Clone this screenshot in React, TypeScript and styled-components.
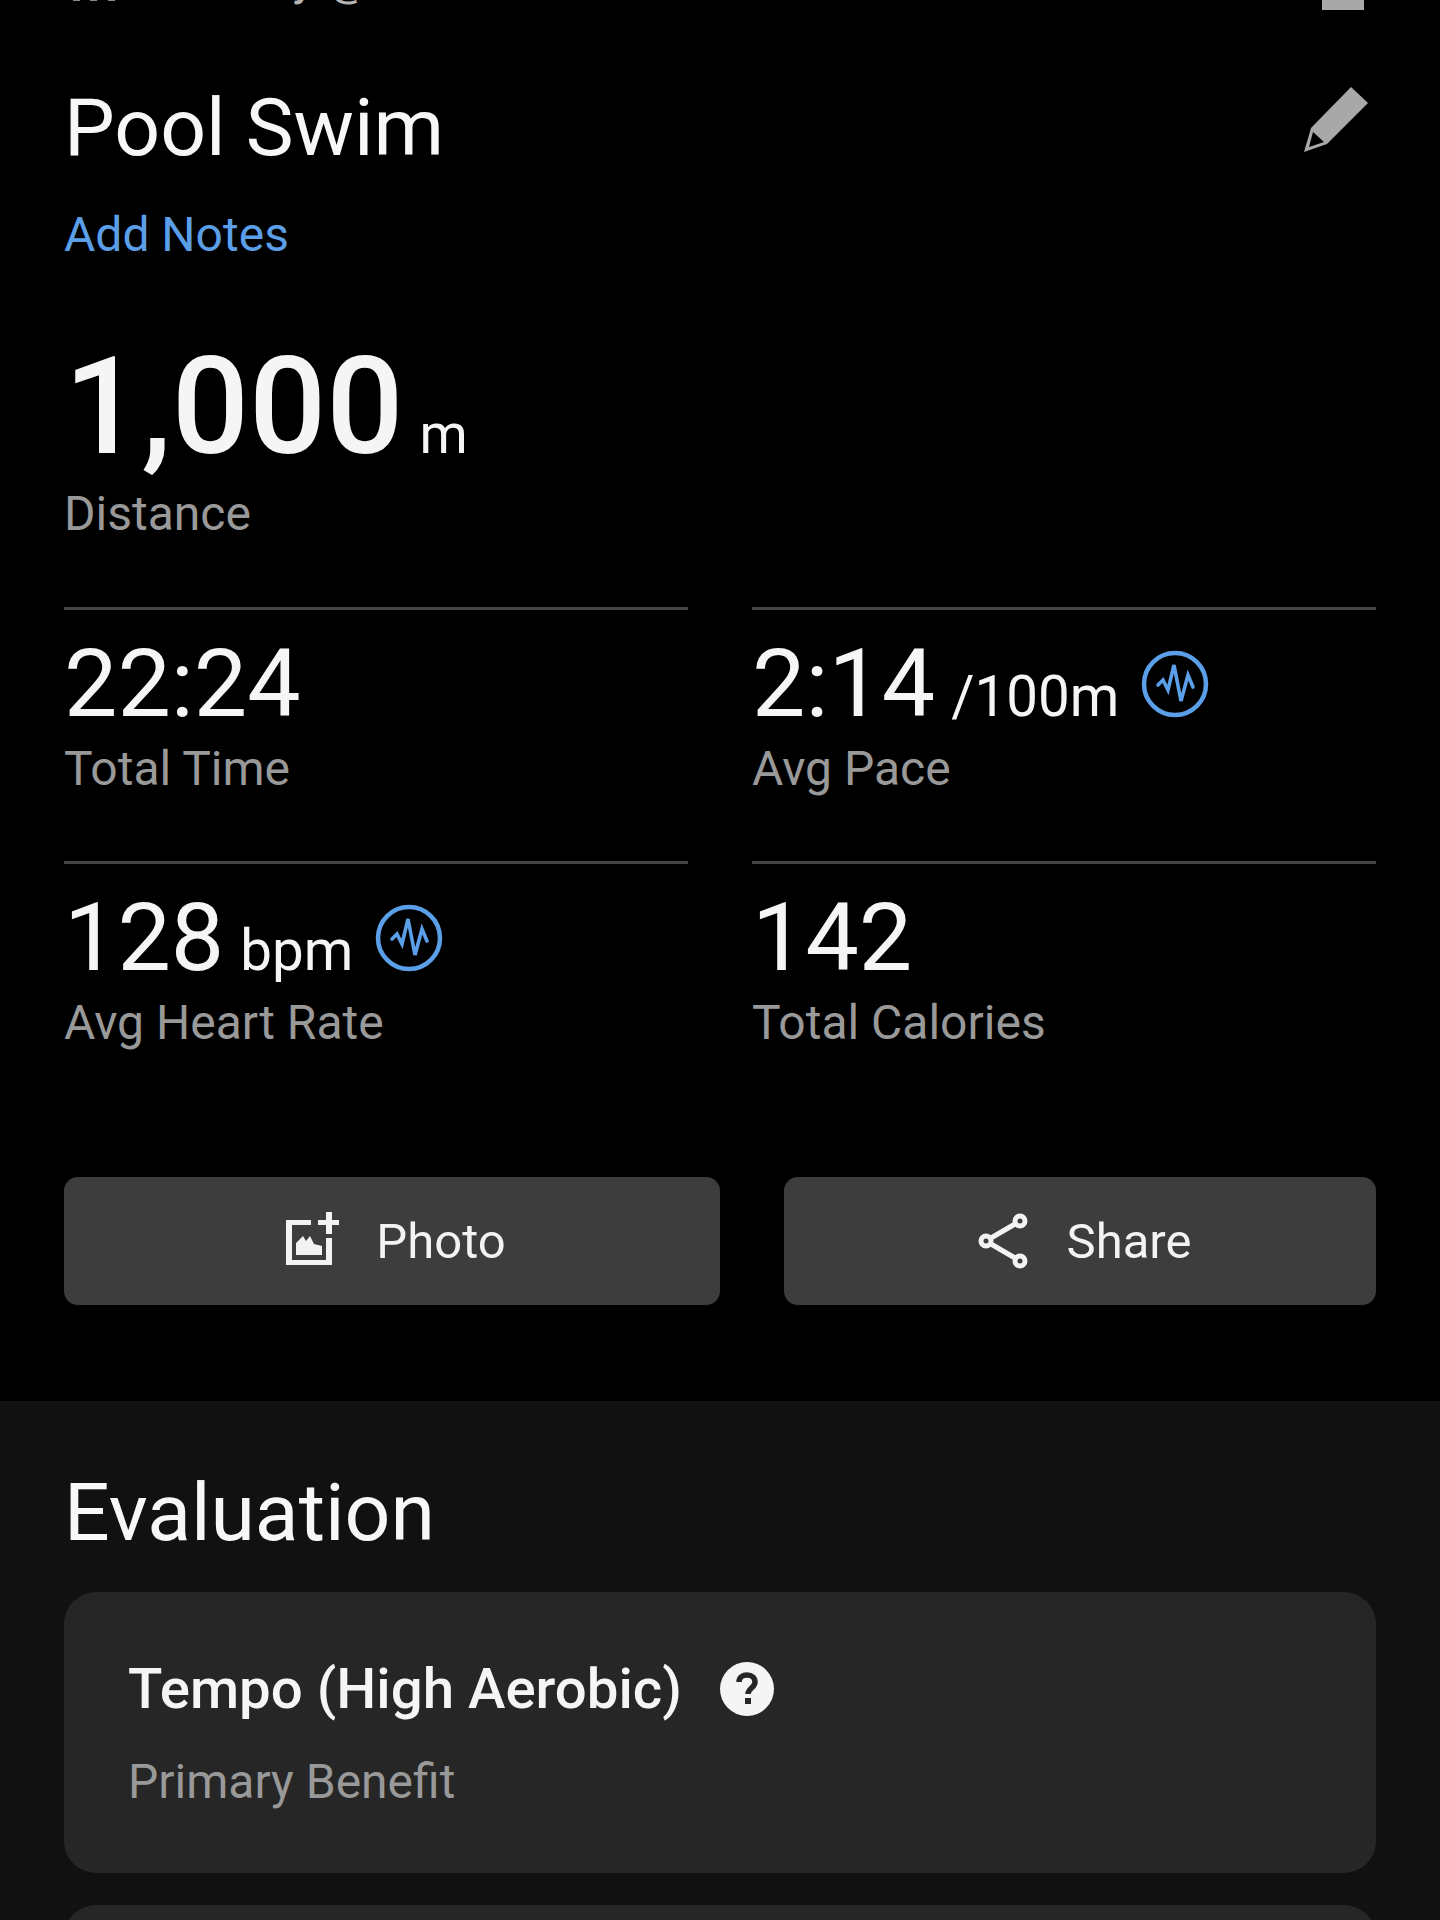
import React from "react";
import styled, { createGlobalStyle } from "styled-components";

const Global = createGlobalStyle`
  html, body { margin: 0; padding: 0; background: #000; }
  body { font-family: Roboto, "Liberation Sans", sans-serif; overflow: hidden; }
`;

const Page = styled.div`
  width: 1440px;
  height: 1920px;
  overflow: hidden;
  background: #000;
  color: #f5f5f5;
`;

const Summary = styled.section`
  padding: 0 64px;
  height: 1401px;
  box-sizing: border-box;
  display: flex;
  flex-direction: column;
`;

const DateRow = styled.div`
  height: 10px;
  margin-top: -6px;
  display: flex;
  align-items: flex-start;
  font-size: 48px;
  line-height: 16px;
  color: #b5b5b5;
`;
const ActivityMark = styled.svg`
  width: 60px;
  height: 9px;
  margin-top: 5px;
  flex: none;
`;
const DateText = styled.div`
  margin-top: -24px;
  padding-left: 20px;
  flex: 1;
  white-space: nowrap;
`;
const Menu = styled.div`
  width: 42px;
  height: 10px;
  margin: 6px 12px 0 0;
  background: #a8a8a8;
`;

const TitleRow = styled.div`
  margin-top: 78px;
  display: flex;
  justify-content: space-between;
  align-items: flex-start;
`;
const Title = styled.h1`
  margin: 0;
  font-size: 80.5px;
  font-weight: 400;
  line-height: 92px;
  color: #f7f7f7;
`;
const Pencil = styled.svg`
  width: 66px;
  height: 68px;
  margin: 4px 7px 0 0;
`;
const NotesLink = styled.a`
  margin-top: 33px;
  font-size: 48px;
  line-height: 56px;
  color: #5b9fe8;
`;

const HeroValue = styled.div`
  margin-top: 91px;
  display: flex;
  align-items: baseline;
  gap: 16px;
  font-size: 136px;
  font-weight: 500;
  line-height: 106px;
`;
const HeroUnit = styled.span`
  font-size: 55px;
  font-weight: 400;
`;
const Label = styled.div`
  font-size: 48px;
  line-height: 54px;
  color: #999;
`;

const Stats = styled.div`
  margin-top: 66px;
  display: grid;
  grid-template-columns: 624px 624px;
  column-gap: 64px;
`;
const Stat = styled.div`
  border-top: 3px solid #444;
  height: 254px;
  box-sizing: border-box;
  padding-top: 21px;
`;
const ValueRow = styled.div`
  display: flex;
  align-items: baseline;
  height: 111px;
  font-size: 95px;
  line-height: 106px;
`;
const Unit = styled.span`
  margin-left: 16px;
  font-size: 56.5px;
`;
const Badge = styled.svg`
  width: 68px;
  height: 68px;
  margin-left: 22px;
  align-self: flex-start;
  margin-top: 19px;
`;

const Actions = styled.div`
  margin-top: 62px;
  display: grid;
  grid-template-columns: 656px 592px;
  column-gap: 64px;
`;
const Action = styled.button`
  height: 128px;
  border: 0;
  border-radius: 14px;
  padding: 0 0 0 8px;
  background: #3d3d3d;
  color: #f3f3f3;
  font: 400 49px Roboto, sans-serif;
  display: flex;
  align-items: center;
  justify-content: center;
  gap: 36px;
`;
const ActionIcon = styled.svg`
  width: 54px;
  height: 62px;
`;

const Evaluation = styled.section`
  background: #111;
  height: 519px;
  padding: 66px 64px 0;
  box-sizing: border-box;
`;
const SectionTitle = styled.h2`
  margin: 0;
  font-size: 80.5px;
  font-weight: 400;
  line-height: 92px;
  color: #f7f7f7;
`;
const Card = styled.div`
  margin-top: 33px;
  height: 281px;
  box-sizing: border-box;
  padding: 62px 64px 0;
  background: #262626;
  border-radius: 32px;
`;
const CardTitle = styled.div`
  display: flex;
  align-items: center;
  gap: 38px;
  font-size: 56.4px;
  font-weight: 500;
  line-height: 70px;
`;
const Help = styled.svg`
  width: 54px;
  height: 54px;
`;
const CardLabel = styled(Label)`
  margin-top: 31px;
`;
const NextCard = styled(Card)`
  margin-top: 32px;
`;

const Pulse = () => (
  <Badge viewBox="0 0 68 68" fill="none" stroke="#5b9fe8">
    <circle cx="34" cy="34" r="31" strokeWidth="4.5" />
    <path
      d="M17 35L22 30 27 40 33 15 40 51 47 25 52 37"
      strokeWidth="3.6"
      strokeLinejoin="miter"
      strokeLinecap="round"
    />
  </Badge>
);

export default function App() {
  return (
    <Page>
      <Global />
      <Summary>
        <DateRow>
          <ActivityMark viewBox="0 0 60 9" fill="#8a8a8a">
            <rect x="9" y="0" width="7" height="2" />
            <rect x="26" y="0" width="7" height="2" />
            <rect x="44" y="0" width="7" height="2" />
          </ActivityMark>
          <DateText>Monday @ 5:00 am</DateText>
          <Menu />
        </DateRow>
        <TitleRow>
          <Title>Pool Swim</Title>
          <Pencil viewBox="0 0 66 68" fill="#a8a8a8">
            <path d="M1 66L8 42 48 1 65 17 24 58ZM10 46L6 61 21 56Z" fillRule="evenodd" />
          </Pencil>
        </TitleRow>
        <NotesLink>Add Notes</NotesLink>
        <HeroValue>
          1,000<HeroUnit>m</HeroUnit>
        </HeroValue>
        <Label>Distance</Label>
        <Stats>
          <Stat>
            <ValueRow>22:24</ValueRow>
            <Label>Total Time</Label>
          </Stat>
          <Stat>
            <ValueRow>
              2:14<Unit>/100m</Unit>
              <Pulse />
            </ValueRow>
            <Label>Avg Pace</Label>
          </Stat>
          <Stat>
            <ValueRow>
              128<Unit>bpm</Unit>
              <Pulse />
            </ValueRow>
            <Label>Avg Heart Rate</Label>
          </Stat>
          <Stat>
            <ValueRow>142</ValueRow>
            <Label>Total Calories</Label>
          </Stat>
        </Stats>
        <Actions>
          <Action>
            <ActionIcon viewBox="0 0 54 62" fill="#f3f3f3">
              <path d="M0 10H25V15H6V50H40V28H46V55H0Z" />
              <path d="M40 2H46V10H53V15H46V24H40V15H32V10H40Z" />
              <path d="M10 45V33L17 26 20 31 24 26 28 34 36 36V45Z" />
            </ActionIcon>
            Photo
          </Action>
          <Action>
            <ActionIcon viewBox="0 0 54 62" fill="none" stroke="#f3f3f3" strokeWidth="5">
              <circle cx="43" cy="11" r="5" />
              <circle cx="9" cy="31" r="5" />
              <circle cx="43" cy="51" r="5" />
              <path d="M38 14L14 28M14 34L38 48" />
            </ActionIcon>
            Share
          </Action>
        </Actions>
      </Summary>
      <Evaluation>
        <SectionTitle>Evaluation</SectionTitle>
        <Card>
          <CardTitle>
            Tempo (High Aerobic)
            <Help viewBox="0 0 54 54">
              <circle cx="27" cy="27" r="27" fill="#f5f5f5" />
              <path d="M19 20c0-5 4-7 8-7 5 0 8 3 8 7 0 6-7 6-7 12" fill="none" stroke="#262626" strokeWidth="5.5" />
              <rect x="25" y="36" width="6" height="6" fill="#262626" />
            </Help>
          </CardTitle>
          <CardLabel>Primary Benefit</CardLabel>
        </Card>
        <NextCard />
      </Evaluation>
    </Page>
  );
}
